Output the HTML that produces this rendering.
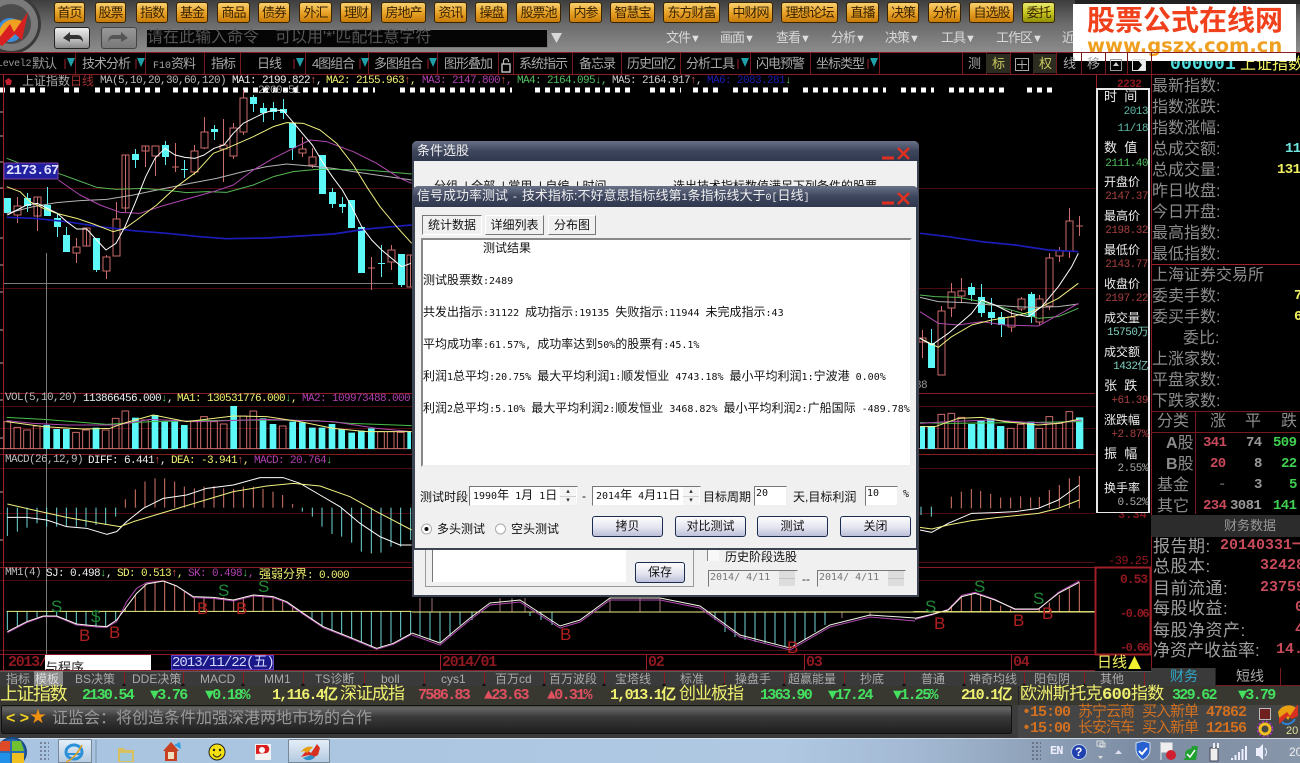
<!DOCTYPE html>
<html lang="zh-CN"><head><meta charset="utf-8"><title>条件选股</title>
<style>
html,body{margin:0;padding:0;background:#000;}
#p{position:relative;width:1300px;height:763px;overflow:hidden;background:#000;font-family:"Liberation Sans","Noto Sans CJK SC",sans-serif;color:#999;}
.t{position:absolute;white-space:nowrap;line-height:1;}
.m{font-family:"Liberation Mono","Noto Sans CJK SC",monospace;}
.b{position:absolute;box-sizing:border-box;}
svg{position:absolute;left:0;top:0;}
.btn{position:absolute;top:2px;height:21px;box-sizing:border-box;border:1px solid #3a2500;border-radius:3px;background:linear-gradient(#f8d070,#e8a428 50%,#c87c08);color:#3a2200;font-size:13px;letter-spacing:-1px;line-height:19px;text-align:center;white-space:nowrap;overflow:hidden;}
.mn{position:absolute;top:30px;font-size:13px;letter-spacing:-1px;color:#d8d8d8;white-space:nowrap;line-height:16px;}
.mn s{text-decoration:none;font-size:11px;color:#e0e0e0;letter-spacing:0;}
.r2{position:absolute;top:56px;font-size:13px;letter-spacing:-1px;color:#a8a8a8;line-height:16px;white-space:nowrap;}
.tb{position:absolute;top:673px;font-size:12px;color:#aaa;line-height:13px;white-space:nowrap;}
.tk{position:absolute;top:687px;font-size:15px;font-weight:bold;line-height:18px;white-space:nowrap;font-family:"Liberation Mono","Noto Sans CJK SC",monospace;letter-spacing:-1.700px;}
.g{color:#44e060;}.y{color:#f0f070;}.rd{color:#e05060;}
.lb{position:absolute;left:1152px;font-size:16px;color:#8c8c8c;line-height:18px;white-space:nowrap;}
.il{position:absolute;left:1104px;font-size:12px;color:#eee;line-height:14px;white-space:nowrap;}
.iv{position:absolute;right:152px;font-size:11px;line-height:12px;white-space:nowrap;font-family:"Liberation Mono","Noto Sans CJK SC",monospace;letter-spacing:-.5px;}
.fn{position:absolute;left:1153px;font-size:17px;color:#a0a0a0;line-height:19px;white-space:nowrap;letter-spacing:.5px;}
.fv{position:absolute;font-size:15px;font-weight:bold;color:#c84a5a;line-height:18px;white-space:nowrap;font-family:"Liberation Mono",monospace;}
.tn{position:absolute;font-size:14px;font-weight:bold;line-height:16px;white-space:nowrap;font-family:"Liberation Mono",monospace;letter-spacing:-.6px;}
.ttl{position:absolute;font-size:13px;color:#eee;white-space:nowrap;line-height:15px;}
.dt{position:absolute;font-size:10px;color:#111;white-space:nowrap;line-height:14px;font-family:"DejaVu Sans Mono","Liberation Mono",monospace;}
.dt i,.di i{font-style:normal;font-size:12px;font-family:"Noto Sans CJK SC",sans-serif;}
.di{position:absolute;font-size:10px;color:#111;white-space:nowrap;line-height:16px;font-family:"DejaVu Sans Mono","Liberation Mono",monospace;}
.lab{position:absolute;font-size:12px;color:#111;white-space:nowrap;line-height:14px;}
.pb{position:absolute;top:516px;width:71px;height:21px;box-sizing:border-box;border:1px solid #1c2c50;border-radius:3px;background:linear-gradient(#fcfcff,#e4e4f0 55%,#bcc0d8);font-size:12px;text-align:center;line-height:18px;color:#111;}
.tabb{position:absolute;top:215px;height:20px;box-sizing:border-box;background:#f0f0f0;border:1px solid;border-color:#fff #777 #777 #fff;font-size:12px;text-align:center;line-height:18px;color:#111;}
.inp{position:absolute;box-sizing:border-box;background:#fff;border:1px solid;border-color:#777 #eee #eee #777;height:20px;}
.sp{position:absolute;width:16px;height:18px;box-sizing:border-box;background:linear-gradient(#f5f5f5 49%,#888 50%,#f5f5f5 54%);font-size:7px;color:#333;text-align:center;line-height:9px;}
.sm{font-size:17px;color:#208838;}.bm{font-size:17px;color:#b02020;}
</style></head><body><div id="p">

<!-- toolbar -->
<div class="b" style="left:0;top:0;width:1300px;height:52px;background:linear-gradient(#3e3e3e,#6a6a6a 45%,#8c8c8c)"></div>
<svg width="50" height="52" viewBox="0 0 50 52"><circle cx="11" cy="24" r="30" fill="#3a3a3a"/><circle cx="11" cy="24" r="27" fill="#7a7a7a"/><circle cx="11" cy="24" r="20" fill="#4c4c4c"/><circle cx="10" cy="30" r="12" fill="#3a8ee0"/><path d="M-2 36C0 20 12 16 24 22L12 38Z" fill="#f0a020"/><path d="M-4 42L10 24 14 32 28 12 22 40 15 34 2 46Z" fill="#d82020"/></svg>

<div class="btn" style="left:54px;width:31px">首页</div><div class="btn" style="left:95px;width:31px">股票</div><div class="btn" style="left:136px;width:32px">指数</div><div class="btn" style="left:176px;width:32px">基金</div><div class="btn" style="left:217px;width:33px">商品</div><div class="btn" style="left:258px;width:32px">债券</div><div class="btn" style="left:299px;width:33px">外汇</div><div class="btn" style="left:340px;width:32px">理财</div><div class="btn" style="left:381px;width:45px">房地产</div><div class="btn" style="left:434px;width:33px">资讯</div><div class="btn" style="left:475px;width:33px">操盘</div><div class="btn" style="left:516px;width:45px">股票池</div><div class="btn" style="left:569px;width:33px">内参</div><div class="btn" style="left:610px;width:45px">智慧宝</div><div class="btn" style="left:663px;width:57px">东方财富</div><div class="btn" style="left:728px;width:45px">中财网</div><div class="btn" style="left:781px;width:57px">理想论坛</div><div class="btn" style="left:846px;width:33px">直播</div><div class="btn" style="left:887px;width:32px">决策</div><div class="btn" style="left:928px;width:33px">分析</div><div class="btn" style="left:969px;width:45px">自选股</div><div class="btn" style="left:1022px;width:33px;background:linear-gradient(#e8e870,#c8c820 50%,#909008)">委托</div>

<div class="b" style="left:54px;top:27px;width:36px;height:22px;border:1px solid #222;border-radius:3px;background:linear-gradient(#eee,#bbb 60%,#888)"></div>
<div class="b" style="left:101px;top:27px;width:36px;height:22px;border:1px solid #444;border-radius:3px;background:linear-gradient(#999,#777)"></div>
<svg width="140" height="52"><path d="M63 38l7-6v3h7c4 0 6 3 6 7-2-3-3-3-6-3h-7v3z" fill="#333"/><path d="M128 38l-7-6v3h-7c-4 0-6 3-6 7 2-3 3-3 6-3h7v3z" fill="#555"/></svg>
<div class="b" style="left:146px;top:29px;width:402px;height:19px;background:#050505;border:1px solid #777"></div>
<div class="t" style="left:147px;top:30px;font-size:16px;color:#565656">请在此输入命令　可以用'*'匹配任意字符</div>
<svg width="570" height="52"><path d="M551 33h11l-5.500 10z" fill="#d8d8d8"/></svg>

<div class="mn" style="left:666px">文件<s>▼</s></div><div class="mn" style="left:720px">画面<s>▼</s></div><div class="mn" style="left:776px">查看<s>▼</s></div><div class="mn" style="left:831px">分析<s>▼</s></div><div class="mn" style="left:885px">决策<s>▼</s></div><div class="mn" style="left:941px">工具<s>▼</s></div><div class="mn" style="left:996px">工作区<s>▼</s></div><div class="mn" style="left:1062px">近</div>

<!-- row 2 -->
<svg width="1300" height="90" style="z-index:1">
<path d="M0 52.500H1300M0 74.500H1300" stroke="#8a1c24" stroke-width="1"/>
<path d="M75.500 53V74M145.500 53V74M204.500 53V74M240.500 53V74M305.500 53V74M368.500 53V74M437.500 53V74M498.500 53V74M513.500 53V74M572.500 53V74M621.500 53V74M680.500 53V74M750.500 53V74M810.500 53V74M879.500 53V74M962.500 53V74M986.500 53V74M1010.500 53V74M1033.500 53V74M1056.500 53V74M1081.500 53V74M1105.500 53V74M1127.500 53V74M1151.500 53V74" stroke="#7a1820"/>
<path d="M65 59V69M136 59V69M294 59V69M360 59V69M428 59V69M738 59V69M868 59V69" stroke="#a02030"/>
<path d="M67 58h8l-4 9zM137 58h8l-4 9zM296 58h8l-4 9zM361 58h8l-4 9zM429 58h8l-4 9zM741 58h8l-4 9zM870 58h8l-4 9z" fill="#20a0a8"/>
<rect x="986" y="54" width="24" height="19" fill="#2c2c20"/><rect x="1033" y="54" width="23" height="19" fill="#2c2c20"/>
<rect x="1015.500" y="58.500" width="13" height="12" fill="none" stroke="#aaa"/><path d="M1022 60v9M1017 64.500h10" stroke="#aaa"/>
<rect x="1110.500" y="59.500" width="11" height="11" fill="none" stroke="#999"/><path d="M1116 62l-3 4h6z" fill="#ccc"/>
<rect x="1132.500" y="59.500" width="13" height="11" fill="none" stroke="#ddd"/><path d="M1138 60h7v10h-7l4-5z" fill="#eee"/>
<path d="M502 64h8v8h-8z" fill="none" stroke="#bbb" stroke-width="1.500"/><path d="M503.500 64v-3c0-3 5-3 5 0v1" fill="none" stroke="#bbb" stroke-width="1.200"/>
</svg>
<div style="position:absolute;left:0;top:0;width:1300px;height:90px;z-index:2">
<div class="t m" style="left:-3px;top:60px;font-size:10px;color:#999;letter-spacing:-.3px">Level2</div><div class="t" style="left:32px;top:57px;font-size:13px;letter-spacing:-1px;color:#999">默认</div>
<div class="r2" style="left:82px">技术分析</div><div class="r2" style="left:153px"><span class="m" style="font-size:10px;letter-spacing:0">F10</span>资料</div><div class="r2" style="left:211px">指标</div><div class="r2" style="left:257px">日线</div><div class="r2" style="left:312px">4图组合</div><div class="r2" style="left:374px">多图组合</div><div class="r2" style="left:444px">图形叠加</div><div class="r2" style="left:519px">系统指示</div><div class="r2" style="left:579px">备忘录</div><div class="r2" style="left:627px">历史回忆</div><div class="r2" style="left:686px">分析工具</div><div class="r2" style="left:756px">闪电预警</div><div class="r2" style="left:816px">坐标类型</div><div class="r2" style="left:968px">测</div><div class="r2" style="left:992px;color:#c8c860">标</div><div class="r2" style="left:1039px;color:#c8c860">权</div><div class="r2" style="left:1063px">线</div><div class="r2" style="left:1087px">移</div>
</div>

<!-- chart -->
<svg width="1300" height="763" viewBox="0 0 1300 763" fill="none">
<path d="M0 90H50M64 90H79M95 90H160M173 90H375M400 90H512M535 90H632M650 90H681M693 90H718M733 90H789M803 90H886M901 90H934M949 90H1004M1027 90H1052" stroke="#fff" stroke-width="5" stroke-dasharray="5 5"/>
<path d="M0 188.500H1095M0 288.500H1095M0 406.500H1095M0 428.500H1095M0 468.500H1095M0 513.500H1095M0 562.500H1095M0 580.500H1095M0 650.500H1095" stroke="#4a0c10"/>
<path d="M3.500 74V670M1096.500 74V513" stroke="#a02028"/>
<path d="M0 393.500H1095M0 454.500H1095M0 567.500H1095M0 654.500H1095M0 670.500H1095" stroke="#8a1c24"/>
<path d="M46.500 253V654M4 283.500H393" stroke="#7c7c7c"/>

<!-- candles -->
<path d="M17.500 197V206M17.500 215V223M14 206h7v9h-7zM37.500 197V231M34 197h7v19h-7zM76.500 238V247M76.500 253V263M73 247h7v6h-7zM86.500 228V246M83 228h7v18h-7zM106.500 255V257M106.500 271V279M103 257h7v14h-7zM116.500 202V219M113 219h7v37h-7zM125.500 155V212M122 155h7v53h-7zM145.500 146V167M142 146h7v5h-7zM155.500 156V176M152 146h7v10h-7zM175.500 143V172M172 167h7M194.500 145V151M194.500 172V175M191 151h7v21h-7zM204.500 117V132M204.500 148V149M201 132h7v16h-7zM223.500 119V145M223.500 149V182M220 145h7v4h-7zM233.500 123V128M233.500 156V159M230 128h7v28h-7zM243.500 90V98M243.500 132V135M240 98h7v34h-7zM302.500 137V149M302.500 153V157M299 149h7v4h-7zM312.500 148V157M312.500 165V168M309 157h7v8h-7zM371.500 257V290M368 268h7M391.500 245V250M391.500 262V270M388 250h7v12h-7zM410.500 255V287M407 255h7v32h-7z" stroke="#cc6c6c"/>
<path d="M47.500 187V205M57.500 213V218M57.500 227V237M27.500 193V198M27.500 206V212M66.500 227V235M96.500 270V272M135.500 149V154M135.500 160V168M165.500 141V145M165.500 157V165M184.500 160V178M181 169.500h7M214.500 125V140M253.500 95V112M263.500 103V122M273.500 102V120M283.500 99V119M292.500 148V160M332.500 188V208M342.500 197V213M381.500 245V277M378 263.500h7M401.500 285V287" stroke="#5cf0f0"/>
<path d="M4 198h7v15h-7zM24 198h7v8h-7zM44 205h7v11h-7zM54 218h7v9h-7zM63 235h7v17h-7zM93 238h7v32h-7zM132 154h7v6h-7zM162 145h7v12h-7zM211 129h7v3h-7zM250 97h7v7h-7zM260 108h7v5h-7zM270 108h7v4h-7zM280 109h7v4h-7zM289 123h7v25h-7zM319 155h7v39h-7zM329 192h7v12h-7zM339 204h7v3h-7zM348 200h7v28h-7zM358 227h7v46h-7zM398 254h7v31h-7z" fill="#5cf8f8"/>
<path d="M922.500 330V358M919 338h7v4h-7zM941.500 306V311M938 311h7v64h-7zM951.500 283V292M951.500 308V317M948 292h7v16h-7zM961.500 278V291M961.500 296V302M958 291h7v5h-7zM1011.500 310V317M1011.500 327V332M1008 317h7v10h-7zM1021.500 297V299M1021.500 309V311M1018 299h7v10h-7zM1039.500 295V299M1039.500 322V325M1036 299h7v23h-7zM1049.500 253V258M1049.500 306V310M1046 258h7v48h-7zM1059.500 247V251M1059.500 256V262M1056 251h7v5h-7zM1069.500 208V221M1069.500 251V258M1066 221h7v30h-7zM1079.500 216V236M1076 226h7" stroke="#cc6c6c"/>
<path d="M931.500 329V343M971.500 283V287M971.500 295V301M981.500 284V297M981.500 313V317M991.500 298V312M991.500 318V325M1001.500 312V317M1001.500 325V337M1031.500 292V294M1031.500 317V323" stroke="#5cf0f0"/>
<path d="M928 343h7v25h-7zM968 287h7v8h-7zM978 297h7v16h-7zM988 312h7v6h-7zM998 317h7v8h-7zM1028 294h7v23h-7z" fill="#5cf8f8"/>

<!-- MA lines left -->
<g transform="translate(0,80) scale(.33333)" stroke-width="3" stroke-linejoin="round">
<path stroke="#1c1cb8" stroke-width="5" d="M20 412L100 415 200 425 300 440 400 452 500 460 600 470 680 476 800 474 900 468 1000 462 1100 447 1235 435"/>
<path stroke="#b4b4b4" d="M20 400L100 380 170 368 240 362 320 358 400 345 480 328 570 310 650 295 730 275 800 260 860 252 930 258 1000 265 1060 275 1130 285 1235 300"/>
<path stroke="#56b856" d="M20 235L60 250 175 280 230 300 290 322 350 328 430 325 510 332 560 338 620 335 680 337 760 315 820 290 880 275 950 268 1010 268 1100 270 1235 282"/>
<path stroke="#b048b0" d="M175 300L240 345 300 375 360 397 420 400 480 380 550 360 640 335 700 315 760 270 820 235 880 205 930 180 980 185 1060 215 1130 250 1200 295 1235 310"/>
<path stroke="#f0f080" d="M20 320L60 335 90 365 130 385 170 400 230 415 280 432 340 455 375 445 410 420 470 375 530 320 590 275 640 220 680 205 760 170 820 140 860 128 910 130 960 150 1010 190 1060 255 1100 320 1140 380 1190 440 1235 490"/>
<path stroke="#fff" d="M22 405L80 375 112 370 142 385 172 400 200 425 230 447 260 447 290 480 318 510 348 490 375 440 405 370 437 290 465 235 495 205 525 225 555 232 585 235 612 225 642 205 672 195 700 160 730 130 760 115 790 100 820 90 850 92 878 125 907 160 937 195 967 245 997 290 1027 330 1055 380 1085 440 1115 480 1145 510 1175 535 1205 560 1233 550"/>
</g>
<!-- MA lines right -->
<g transform="translate(915,90) scale(.33333)" stroke-width="3" stroke-linejoin="round">
<path stroke="#1c1cb8" stroke-width="5" d="M15 430L100 440 200 455 300 465 400 480 490 485"/>
<path stroke="#56b856" d="M15 615L60 620 130 622 200 635 270 655 330 672 370 685 430 680 490 655"/>
<path stroke="#b4b4b4" d="M15 622L70 635 150 638 230 645 300 650 360 652 430 650 490 642"/>
<path stroke="#b048b0" d="M15 665L70 700 130 705 200 695 270 705 330 707 370 708 430 675 490 640"/>
<path stroke="#f0f080" d="M15 745L70 772 110 740 170 705 230 690 290 680 350 665 430 625 490 580"/>
<path stroke="#fff" d="M15 745L50 765 100 730 170 670 200 630 240 645 290 670 340 680 380 650 430 590 470 530 490 490"/>
</g>

<!-- VOL / MACD / MM1 left -->
<g transform="translate(0,380) scale(.33333)" stroke-width="3" stroke-linejoin="round">
<path stroke="#cc6c6c" d="M12 206V125h20V206M42 206V142h20V206M71 206V150h20V206M100 206V138h20V206M218 206V157h20V206M248 206V150h20V206M307 206V150h20V206M337 206V115h20V206M366 206V93h20V206M425 206V120h20V206M572 206V125h20V206M602 206V110h20V206M632 206V125h20V206M661 206V132h20V206M720 206V108h20V206M750 206V93h20V206M838 206V138h20V206M1133 206V155h20V206M1162 206V155h20V206M1192 206V157h20V206M0 206H1233"/>
<path fill="#5cf8f8" d="M130 207V135h20V207zM160 207V147h20V207zM189 207V147h20V207zM278 207V143h20V207zM396 207V113h20V207zM455 207V105h20V207zM484 207V125h20V207zM514 207V125h20V207zM543 207V135h20V207zM691 207V78h20V207zM779 207V115h20V207zM809 207V132h20V207zM868 207V125h20V207zM897 207V127h20V207zM927 207V143h20V207zM956 207V143h20V207zM986 207V132h20V207zM1015 207V148h20V207zM1045 207V158h20V207zM1074 207V152h20V207zM1104 207V145h20V207zM1222 207V155h11V207z"/>
<path stroke="#48c048" d="M20 112L130 118 220 125 320 133 450 125 600 122 800 120 950 122 1050 130 1235 137"/>
<path stroke="#b048b0" d="M20 122L100 130 200 135 350 135 450 118 600 125 800 118 1000 125 1130 145 1235 155"/>
<path stroke="#f0f080" d="M20 125L130 140 250 147 330 145 370 130 460 105 560 125 700 108 800 110 900 125 1000 145 1100 155 1235 155"/>
<!-- MACD -->
<path stroke="#70d8d8" d="M22 383V468M52 383V455M81 383V443M111 383V430M140 383V440M170 383V440M199 383V440M229 383V440M258 383V440M288 383V435M317 383V435M347 383V410M907 383V395M937 383V410M966 383V440M996 383V462M1025 383V470M1055 383V488M1084 383V515M1114 383V520M1143 383V518M1173 383V500M1202 383V500M1232 383V480"/>
<path stroke="#d87868" d="M376 383V358M406 383V328M435 383V305M465 383V295M494 383V295M524 383V305M553 383V320M583 383V325M612 383V320M642 383V318M671 383V325M701 383V327M730 383V320M760 383V320M789 383V327M819 383V335M848 383V345M878 383V372"/>
<path stroke="#fff" d="M22 412L80 412 140 420 200 440 260 445 320 463 350 455 380 425 430 385 490 355 560 345 620 325 700 315 780 293 850 293 900 310 960 345 1020 380 1080 430 1140 470 1200 495 1235 495"/>
<path stroke="#f0f080" d="M22 372L100 390 200 412 300 430 360 440 400 425 500 395 600 365 700 335 800 318 880 310 960 318 1050 350 1130 395 1235 450"/>
<!-- MM1 -->
<path stroke="#70d8d8" d="M22 694V750M52 694V738M81 694V723M111 694V712M140 694V707M170 694V708M199 694V722M229 694V732M258 694V735M288 694V738M317 694V740M347 694V722M936 694V722M966 694V738M996 694V755M1025 694V767M1055 694V778M1084 694V790M1114 694V802M1143 694V800M1173 694V788M1202 694V772M1232 694V762"/>
<path stroke="#d87868" d="M376 694V685M406 694V645M435 694V612M465 694V605M494 694V603M524 694V615M553 694V635M583 694V650M612 694V650M642 694V652M671 694V652M701 694V660M730 694V655M760 694V645M789 694V645M819 694V650M848 694V662M878 694V680"/>
<path stroke="#f0f080" stroke-width="3" d="M20 694H1235"/>
<path stroke="#b048b0" d="M22 758L80 728 130 710 170 710 230 735 290 741 320 742 350 725 380 665 410 625 440 608 490 603 530 618 580 653 640 655 700 663 760 648 820 653 860 668 910 703 970 743 1050 775 1130 808 1180 793 1235 763"/>
<path stroke="#f8f8e8" d="M22 755L80 725 130 708 170 708 230 732 290 738 320 740 350 720 380 680 410 640 440 612 490 603 530 618 580 650 640 652 700 660 760 645 820 650 860 665 910 700 970 740 1050 772 1130 805 1180 790 1235 760"/>
</g>
<!-- right lower -->
<g transform="translate(915,380) scale(.33333)" stroke-width="3" stroke-linejoin="round">
<path stroke="#cc6c6c" d="M69 206V103h20V206M99 206V100h20V206M129 206V112h20V206M277 206V145h20V206M307 206V133h20V206M363 206V145h20V206M393 206V110h20V206M423 206V130h20V206M453 206V95h20V206M0 206H505"/>
<path fill="#5cf8f8" d="M15 207V138h15V207zM38 207V138h22V207zM159 207V132h22V207zM187 207V122h22V207zM216 207V115h22V207zM246 207V138h22V207zM336 207V125h22V207zM483 207V112h22V207z"/>
<path stroke="#48c048" d="M15 128L100 130 300 128 500 125"/>
<path stroke="#b048b0" d="M15 130L100 125 230 120 340 127 420 130 500 120"/>
<path stroke="#f0f080" d="M15 140L60 140 130 115 200 112 270 125 370 135 430 130 490 118"/>
<path stroke="#d87868" d="M109 385V350M139 385V335M169 385V327M197 385V333M227 385V342M257 385V353M287 385V353M317 385V349M347 385V352M373 385V351M403 385V330M433 385V315M463 385V295M493 385V288"/>
<path stroke="#70d8d8" d="M18 380V405M49 380V410"/>
<path stroke="#fff" d="M15 450L50 457 100 430 170 400 240 398 300 395 370 385 430 360 493 315"/>
<path stroke="#f0f080" d="M15 442L50 447 100 435 170 422 250 412 370 400 430 385 493 360"/>
<path stroke="#d87868" d="M109 695V675M139 695V650M169 695V640M197 695V642M227 695V660M257 695V677M287 695V687M373 695V687M403 695V668M433 695V645M463 695V625M493 695V607"/>
<path stroke="#f0f080" d="M-5 695H540"/>
<path stroke="#b048b0" d="M0 718L50 705 100 688 140 646 180 637 240 658 300 689 370 689 430 637 493 603"/>
<path stroke="#f8f8e8" d="M0 715L50 703 100 690 140 650 180 640 240 660 300 687 370 687 430 640 493 607"/>
</g>
<!-- below dialog mm1 -->
<path stroke="#e0a0a8" d="M420 598V612M432 598V612M500 598V612M512 598V612M525 598V612M610 598V612M640 598V612M660 598V612M842 612V618M870 612V616" opacity=".7"/>
<path stroke="#70d8d8" d="M420 612V636M430 612V640M440 612V642M450 612V636M460 612V625M472 612V620M530 612V616M541 612V620M552 612V625M715 612V620M725 612V632M735 612V637M745 612V640M755 612V642M765 612V643M775 612V644M785 612V646M795 612V645M805 612V640M815 612V632M825 612V625"/>
<path stroke="#f0f080" d="M412 612H1096"/>
<path stroke="#b048b0" d="M412 635L440 645 470 620 490 605 520 602 560 628 580 622 610 600 660 600 700 608 740 637 790 650 830 627 870 617 915 621"/>
<path stroke="#f4f4e8" d="M412 633L440 643 470 618 490 603 520 600 560 626 580 620 610 598 660 598 700 606 740 635 790 648 830 625 870 615 915 618"/>
<!-- axis ticks -->
<path d="M440.500 655V670M646.500 655V670M804.500 655V670M1011.500 655V670" stroke="#a02028"/>
<path d="M0 112h3M0 136h3M0 162h3M0 188h3M0 238h3M0 265h3M0 292h3M0 330h3M0 363h3M0 400h3M0 438h3M0 492h3M0 540h3" stroke="#c8a0a0"/>
<rect x="1095.500" y="567.500" width="55" height="87" stroke="#a02028" stroke-width="2"/>
<rect x="4" y="163" width="54" height="16" fill="#2020a0" stroke="#8040a0"/>
</svg>

<!-- chart labels -->
<div class="t" style="left:5px;top:78px;width:7px;height:7px;background:#c02030;clip-path:polygon(50% 0,100% 40%,80% 100%,20% 100%,0 40%)"></div>
<div class="t" style="left:22px;top:75px;font-size:12px;color:#aaa">上证指数<span style="color:#a03030">日线</span></div>
<div class="t m" style="left:100px;top:76px;font-size:11px;color:#bbb;letter-spacing:-.6px">MA(5,10,20,30,60,120)</div>
<div class="t m" style="left:232px;top:76px;font-size:11px;color:#eee;letter-spacing:-.6px">MA1: 2199.822<span style="color:#d05050">↑</span>,</div>
<div class="t m" style="left:326px;top:76px;font-size:11px;color:#f0f070;letter-spacing:-.6px">MA2: 2155.963<span style="color:#d05050">↑</span>,</div>
<div class="t m" style="left:422px;top:76px;font-size:11px;color:#b040b0;letter-spacing:-.6px">MA3: 2147.800<span style="color:#d05050">↑</span>,</div>
<div class="t m" style="left:517px;top:76px;font-size:11px;color:#50c060;letter-spacing:-.6px">MA4: 2164.095<span style="color:#50c060">↓</span>,</div>
<div class="t m" style="left:612px;top:76px;font-size:11px;color:#ccc;letter-spacing:-.6px">MA5: 2164.917<span style="color:#d05050">↑</span>,</div>
<div class="t m" style="left:707px;top:76px;font-size:11px;color:#1c1cb0;letter-spacing:-.6px">MA6: 2083.281<span style="color:#50c060">↓</span></div>
<div class="t m" style="left:258px;top:86px;font-size:11px;color:#aaa;letter-spacing:-.6px">2200.51</div>
<div class="t m" style="left:6px;top:164px;font-size:14px;font-weight:bold;color:#e0e0ff;letter-spacing:-.9px">2173.67</div>
<div class="t m" style="left:915px;top:381px;font-size:11px;color:#999;letter-spacing:-.6px">88</div>

<div class="t m" style="left:5px;top:393px;font-size:11px;color:#bbb;letter-spacing:-.6px">VOL(5,10,20)</div>
<div class="t m" style="left:83px;top:394px;font-size:11px;color:#eee;letter-spacing:-.6px">113866456.000<span style="color:#50c060">↓</span>,</div>
<div class="t m" style="left:177px;top:394px;font-size:11px;color:#f0f070;letter-spacing:-.6px">MA1: 130531776.000<span style="color:#50c060">↓</span>,</div>
<div class="t m" style="left:302px;top:394px;font-size:11px;color:#b040b0;letter-spacing:-.6px">MA2: 109973488.000</div>

<div class="t m" style="left:5px;top:455px;font-size:11px;color:#bbb;letter-spacing:-.6px">MACD(26,12,9)</div>
<div class="t m" style="left:88px;top:456px;font-size:11px;color:#eee;letter-spacing:-.6px">DIFF: 6.441<span style="color:#d05050">↑</span>,</div>
<div class="t m" style="left:171px;top:456px;font-size:11px;color:#f0f070;letter-spacing:-.6px">DEA: -3.941<span style="color:#d05050">↑</span>,</div>
<div class="t m" style="left:254px;top:456px;font-size:11px;color:#b040b0;letter-spacing:-.6px">MACD: 20.764<span style="color:#50c060">↓</span></div>

<div class="t m" style="left:5px;top:568px;font-size:11px;color:#bbb;letter-spacing:-.6px">MM1(4)</div>
<div class="t m" style="left:46px;top:569px;font-size:11px;color:#eee;letter-spacing:-.6px">SJ: 0.498<span style="color:#50c060">↓</span>,</div>
<div class="t m" style="left:117px;top:569px;font-size:11px;color:#f0f070;letter-spacing:-.6px">SD: 0.513<span style="color:#d05050">↑</span>,</div>
<div class="t m" style="left:188px;top:569px;font-size:11px;color:#b040b0;letter-spacing:-.6px">SK: 0.498<span style="color:#50c060">↓</span>,</div>
<div class="t" style="left:259px;top:568px;font-size:12px;color:#f0f070">强弱分界<span class="m" style="font-size:11px;letter-spacing:-.6px">: 0.000</span></div>

<!-- S B marks -->
<div class="t sm" style="left:51px;top:598px">S</div>
<div class="t sm" style="left:91px;top:608px">$</div>
<div class="t sm" style="left:218px;top:582px">S</div>
<div class="t sm" style="left:258px;top:578px">S</div>
<div class="t bm" style="left:79px;top:627px">B</div>
<div class="t bm" style="left:109px;top:624px">B</div>
<div class="t bm" style="left:197px;top:600px">B</div>
<div class="t bm" style="left:236px;top:600px">B</div>
<div class="t bm" style="left:560px;top:626px">B</div>
<div class="t bm" style="left:787px;top:639px">B</div>
<div class="t sm" style="left:925px;top:598px">S</div>
<div class="t sm" style="left:974px;top:578px">S</div>
<div class="t sm" style="left:1033px;top:590px">S</div>
<div class="t bm" style="left:934px;top:615px">B</div>
<div class="t bm" style="left:1013px;top:612px">B</div>
<div class="t bm" style="left:1042px;top:605px">B</div>

<!-- x axis -->
<div class="t m" style="left:8px;top:655px;font-size:15px;font-weight:bold;color:#901820;letter-spacing:-1.300px">2013/</div>
<div class="b" style="left:45px;top:655px;width:106px;height:15px;background:#fff;overflow:hidden"><span class="t" style="left:0;top:6px;font-size:13px;color:#222">与程序</span></div>
<div class="b" style="left:171px;top:655px;width:103px;height:15px;background:#181888;border:1px solid #6040c0"></div>
<div class="t m" style="left:172px;top:656px;font-size:14px;color:#d8d8ff;letter-spacing:-1px">2013/11/22(五)</div>
<div class="t m" style="left:442px;top:655px;font-size:15px;font-weight:bold;color:#901820;letter-spacing:-1.300px">2014/01</div>
<div class="t m" style="left:648px;top:655px;font-size:15px;font-weight:bold;color:#901820;letter-spacing:-1.300px">02</div>
<div class="t m" style="left:806px;top:655px;font-size:15px;font-weight:bold;color:#901820;letter-spacing:-1.300px">03</div>
<div class="t m" style="left:1013px;top:655px;font-size:15px;font-weight:bold;color:#901820;letter-spacing:-1.300px">04</div>
<div class="t" style="left:1097px;top:655px;font-size:15px;color:#f0f060">日线</div>
<svg width="1300" height="763"><path d="M1128 669l6.500-13 6.500 13z" fill="#f0f030"/></svg>

<!-- price axis -->
<div class="t m" style="left:1117px;top:80px;font-size:11px;font-weight:bold;color:#901820;letter-spacing:-.5px">2232</div>
<div class="t m" style="left:1118px;top:509px;font-size:12px;color:#801820;font-weight:bold">3.34</div>
<div class="t m" style="left:1108px;top:555px;font-size:12px;color:#901820;letter-spacing:-.5px">-39.25</div>
<div class="t m" style="left:1120px;top:573px;font-size:13px;font-weight:bold;color:#901820;letter-spacing:-1px">0.53</div>
<div class="t m" style="left:1120px;top:608px;font-size:12px;font-weight:bold;color:#901820;letter-spacing:-1.600px">-0.06</div>
<div class="t m" style="left:1120px;top:642px;font-size:12px;font-weight:bold;color:#901820;letter-spacing:-1.600px">-0.66</div>

<!-- info column -->
<div class="b" style="left:1096px;top:88px;width:54px;height:425px;background:#000;border:2px solid #e8e8e8;border-bottom-width:1px"></div>
<div class="il" style="top:90px;font-size:13px">时 &nbsp;间</div><div class="iv" style="top:106px;color:#60b8a8">2013</div><div class="iv" style="top:123px;color:#60b8a8">11/18</div>
<div class="il" style="top:141px;font-size:13px">数 &nbsp;值</div><div class="iv" style="top:158px;color:#50c060">2111.40</div>
<div class="il" style="top:175px">开盘价</div><div class="iv" style="top:191px;color:#a84040">2147.37</div>
<div class="il" style="top:209px">最高价</div><div class="iv" style="top:225px;color:#a84040">2198.32</div>
<div class="il" style="top:243px">最低价</div><div class="iv" style="top:259px;color:#a84040">2143.77</div>
<div class="il" style="top:277px">收盘价</div><div class="iv" style="top:293px;color:#a84040">2197.22</div>
<div class="il" style="top:311px">成交量</div><div class="iv" style="top:327px;color:#80d0c0">15750万</div>
<div class="il" style="top:345px">成交额</div><div class="iv" style="top:361px;color:#80d0c0">1432亿</div>
<div class="il" style="top:379px;font-size:13px">张 &nbsp;跌</div><div class="iv" style="top:395px;color:#a84040">+61.39</div>
<div class="il" style="top:413px">涨跌幅</div><div class="iv" style="top:429px;color:#a84040">+2.87%</div>
<div class="il" style="top:447px;font-size:13px">振 &nbsp;幅</div><div class="iv" style="top:463px;color:#aaa">2.55%</div>
<div class="il" style="top:481px">换手率</div><div class="iv" style="top:497px;color:#aaa">0.52%</div>

<!-- right panel -->
<div class="b" style="left:1151px;top:52px;width:149px;height:633px;background:#000;border-left:1px solid #8a1c24"></div>
<div class="t" style="left:1170px;top:56px;font-size:18px;font-weight:bold;color:#50e0e0;font-family:'Liberation Mono',monospace;letter-spacing:.2px">000001</div>
<div class="t" style="left:1240px;top:57px;font-size:16px;color:#f0f060">上证指数</div>
<div class="lb" style="top:78px">最新指数:</div><div class="lb" style="top:99px">指数涨跌:</div><div class="lb" style="top:120px">指数涨幅:</div><div class="lb" style="top:141px">总成交额:</div><div class="lb" style="top:162px">总成交量:</div><div class="lb" style="top:183px">昨日收盘:</div><div class="lb" style="top:204px">今日开盘:</div><div class="lb" style="top:225px">最高指数:</div><div class="lb" style="top:246px">最低指数:</div>
<div class="b" style="left:1151px;top:264px;width:149px;height:1px;background:#a02028"></div>
<div class="lb" style="top:267px">上海证券交易所</div><div class="lb" style="top:288px">委卖手数:</div><div class="lb" style="top:309px">委买手数:</div><div class="lb" style="top:330px;left:1183px">委比:</div><div class="lb" style="top:351px">上涨家数:</div><div class="lb" style="top:372px">平盘家数:</div><div class="lb" style="top:393px">下跌家数:</div>
<div class="tn" style="left:1285px;top:141px;color:#70e8e0">11</div><div class="tn" style="left:1277px;top:162px;color:#f0f060">131</div><div class="tn" style="left:1294px;top:288px;color:#f0f060">7</div><div class="tn" style="left:1294px;top:309px;color:#f0f060">6</div>

<div class="b" style="left:1151px;top:411px;width:149px;height:1px;background:#7a1820"></div>
<div class="b" style="left:1151px;top:432px;width:149px;height:1px;background:#7a1820"></div>
<div class="b" style="left:1195px;top:411px;width:1px;height:103px;background:#7a1820"></div>
<div class="lb" style="top:413px;left:1157px">分类</div><div class="lb" style="top:413px;left:1210px">涨</div><div class="lb" style="top:413px;left:1245px">平</div><div class="lb" style="top:413px;left:1281px">跌</div>
<div class="lb" style="top:435px;left:1166px"><b style="font-family:'Liberation Sans'">A</b>股</div><div class="lb" style="top:456px;left:1166px"><b style="font-family:'Liberation Sans'">B</b>股</div><div class="lb" style="top:477px;left:1157px">基金</div><div class="lb" style="top:498px;left:1157px">其它</div>
<div class="tn" style="left:1203px;top:435px;color:#c84a5a">341</div><div class="tn" style="left:1246px;top:435px;color:#999">74</div><div class="tn" style="left:1273px;top:435px;color:#40d050">509</div>
<div class="tn" style="left:1210px;top:456px;color:#c84a5a">20</div><div class="tn" style="left:1254px;top:456px;color:#999">8</div><div class="tn" style="left:1281px;top:456px;color:#40d050">22</div>
<div class="tn" style="left:1218px;top:477px;color:#555">-</div><div class="tn" style="left:1254px;top:477px;color:#999">3</div><div class="tn" style="left:1289px;top:477px;color:#40d050">5</div>
<div class="tn" style="left:1203px;top:498px;color:#c84a5a">234</div><div class="tn" style="left:1230px;top:498px;color:#999">3081</div><div class="tn" style="left:1273px;top:498px;color:#40d050">141</div>

<div class="b" style="left:1151px;top:515px;width:149px;height:22px;background:#2c2c2c"></div>
<div class="t" style="left:1224px;top:519px;font-size:13px;color:#999">财务数据</div>
<div class="fn" style="top:537px">报告期:</div><div class="fv" style="left:1220px;top:537px">20140331一</div>
<div class="fn" style="top:557px">总股本:</div><div class="fv" style="left:1260px;top:557px">32428</div>
<div class="fn" style="top:579px">目前流通:</div><div class="fv" style="left:1260px;top:579px">23759</div>
<div class="fn" style="top:599px">每股收益:</div><div class="fv" style="left:1295px;top:599px">0</div>
<div class="fn" style="top:621px">每股净资产:</div><div class="fv" style="left:1295px;top:621px">4</div>
<div class="fn" style="top:641px;letter-spacing:0">净资产收益率:</div><div class="fv" style="left:1276px;top:641px">14.1</div>

<!-- tabs -->
<div class="b" style="left:0;top:671px;width:1151px;height:16px;background:#3a3a3a;border-top:1px solid #5a5a5a"></div>
<div class="b" style="left:34px;top:671px;width:29px;height:16px;background:#8c8c8c"></div>
<div class="tb" style="left:6px">指标</div><div class="tb" style="left:35px;color:#ddd">模板</div><div class="tb" style="left:75px">BS决策</div><div class="tb" style="left:132px">DDE决策</div><div class="tb" style="left:200px">MACD</div><div class="tb" style="left:264px">MM1</div><div class="tb" style="left:315px">TS诊断</div><div class="tb" style="left:381px">boll</div><div class="tb" style="left:441px">cys1</div><div class="tb" style="left:495px">百万cd</div><div class="tb" style="left:549px">百万波段</div><div class="tb" style="left:615px">宝塔线</div><div class="tb" style="left:680px">标准</div><div class="tb" style="left:735px">操盘手</div><div class="tb" style="left:788px">超赢能量</div><div class="tb" style="left:860px">抄底</div><div class="tb" style="left:921px">普通</div><div class="tb" style="left:969px">神奇均线</div><div class="tb" style="left:1034px">阳包阴</div><div class="tb" style="left:1100px">其他</div>
<svg width="1300" height="763"><path d="M124 672V686M183 672V686M243 672V686M303 672V686M364 672V686M424 672V686M484 672V686M544 672V686M604 672V686M664 672V686M724 672V686M784 672V686M844 672V686M904 672V686M964 672V686M1024 672V686M1084 672V686M1144 672V686" stroke="#8a1c24" transform="translate(.5,0)"/><path d="M121 687l3-4 3 4zM180 687l3-4 3 4zM240 687l3-4 3 4zM300 687l3-4 3 4zM361 687l3-4 3 4zM421 687l3-4 3 4zM481 687l3-4 3 4zM541 687l3-4 3 4zM601 687l3-4 3 4zM661 687l3-4 3 4zM721 687l3-4 3 4zM781 687l3-4 3 4zM841 687l3-4 3 4zM901 687l3-4 3 4zM961 687l3-4 3 4zM1021 687l3-4 3 4zM1081 687l3-4 3 4z" fill="#111"/></svg>
<div class="b" style="left:1151px;top:668px;width:65px;height:18px;background:#3a3a3a;border-right:1px solid #222"></div>
<div class="t" style="left:1170px;top:669px;font-size:14px;color:#30a8c8">财务</div>
<div class="t" style="left:1236px;top:669px;font-size:14px;color:#aaa">短线</div>
<div class="b" style="left:1280px;top:668px;width:1px;height:18px;background:#7a1820"></div>
<div class="b" style="left:1216px;top:685px;width:84px;height:1px;background:#7a1820"></div>

<!-- ticker -->
<div class="b" style="left:0;top:686px;width:1300px;height:19px;background:#383830"></div>
<div class="tk y" style="left:0;font-weight:normal;font-size:18px;letter-spacing:-1.500px">上证指数</div>
<div class="tk g" style="left:82px">2130.54</div><div class="tk g" style="left:150px">▼3.76</div><div class="tk g" style="left:205px">▼0.18%</div><div class="tk y" style="left:272px">1,116.4亿</div><div class="tk y" style="left:340px;font-weight:normal;font-size:17px;letter-spacing:-1px">深证成指</div>
<div class="tk rd" style="left:418px">7586.83</div><div class="tk rd" style="left:484px">▲23.63</div><div class="tk rd" style="left:547px">▲0.31%</div><div class="tk y" style="left:610px">1,013.1亿</div><div class="tk y" style="left:679px;font-weight:normal;font-size:17px;letter-spacing:-1px">创业板指</div>
<div class="tk g" style="left:760px">1363.90</div><div class="tk g" style="left:828px">▼17.24</div><div class="tk g" style="left:893px">▼1.25%</div><div class="tk y" style="left:961px">210.1亿</div>
<div class="b" style="left:1018px;top:686px;width:1px;height:52px;background:#222"></div>
<div class="tk y" style="left:1020px;font-weight:normal;font-size:17px;letter-spacing:-.6px">欧洲斯托克<b>600</b>指数</div>
<div class="tk g" style="left:1172px">329.62</div><div class="tk g" style="left:1238px">▼3.79</div>

<!-- news -->
<div class="b" style="left:0;top:705px;width:1300px;height:33px;background:#3c3c3c"></div>
<div class="b" style="left:1px;top:705px;width:1011px;height:29px;border-radius:2px;border:1px solid #111;background:linear-gradient(#4a4a4a,#666 8%,#3a3a3a 40%,#1e1e1e)"></div>
<div class="t" style="left:6px;top:711px;font-size:16px;color:#f0d020;font-weight:bold">&lt; &gt;</div>
<div class="t" style="left:30px;top:710px;font-size:16px;color:#f09010">★</div>
<div class="t" style="left:52px;top:711px;font-size:16px;color:#9a9a9a">证监会：将创造条件加强深港两地市场的合作</div>
<div class="b" style="left:1018px;top:705px;width:282px;height:33px;background:#454545"></div>
<div class="t" style="left:1022px;top:705px;font-size:15px;font-weight:bold;color:#d07020;font-family:'Liberation Mono','Noto Sans CJK SC',monospace;letter-spacing:-1px">•15:00 <span style="font-weight:normal">苏宁云商 买入新单</span> 47862</div>
<div class="t" style="left:1022px;top:721px;font-size:15px;font-weight:bold;color:#d07020;font-family:'Liberation Mono','Noto Sans CJK SC',monospace;letter-spacing:-1px">•15:00 <span style="font-weight:normal">长安汽车 买入新单</span> 12156</div>
<div class="b" style="left:1259px;top:708px;width:12px;height:12px;background:#702020;border:1px solid #bbb"></div>
<svg width="1300" height="763"><circle cx="1265" cy="729" r="5" fill="none" stroke="#f0c020" stroke-width="3"/><circle cx="1265" cy="729" r="7.500" fill="none" stroke="#b030d0" stroke-width="1.500" stroke-dasharray="2 2"/>
<path d="M1278 712c4-8 14-8 18-4l-8 12-4-5-4 7z" fill="#e8a010"/><path d="M1279 718l8-6 3 4 8-12v12l-6 3-4-3-9 8z" fill="#d83020"/><path d="M1282 722c4 4 10 2 13-3" stroke="#3080d0" stroke-width="2" fill="none"/></svg>
<div class="t" style="left:1286px;top:726px;font-size:11px;color:#e0e0a0">20</div>
<div class="b" style="left:0;top:734px;width:1018px;height:4px;background:#3a3a3a"></div>

<!-- taskbar -->
<div class="b" style="left:0;top:738px;width:1300px;height:25px;background:linear-gradient(90deg,#a8c4e0,#b0c8e2 60%,#a4bad4 70%,#7c8ca2 88%,#8896aa)"></div>
<div class="b" style="left:0;top:738px;width:1300px;height:1px;background:#dfe8f2;opacity:.8"></div>
<div class="b" style="left:58px;top:739px;width:34px;height:24px;background:linear-gradient(#e4eef8,#b4cae0);border:1px solid #789;border-radius:2px 2px 0 0"></div>
<div class="b" style="left:288px;top:739px;width:42px;height:24px;background:linear-gradient(#e4eef8,#b4cae0);border:1px solid #789;border-radius:2px 2px 0 0"></div>
<svg width="1300" height="763">
<circle cx="12" cy="752" r="15" fill="#184a88"/><circle cx="12" cy="752" r="13" fill="#2a6ab0"/><path d="M1 741h9v10H-2z" fill="#e84820" opacity=".95"/><path d="M12 741h9l3 10H12z" fill="#70c030"/><path d="M-1 753h11v10H0z" fill="#2090e8"/><path d="M12 753h12v10H12z" fill="#f0c020"/>
<path d="M40 743h9M40 747h9M40 751h9M40 755h9M40 759h9M1032 743h9M1032 747h9M1032 751h9M1032 755h9M1032 759h9" stroke="#445" stroke-dasharray="2 2"/>
<path d="M96 740V763" stroke="#7d93ab"/>
<ellipse cx="74" cy="752" rx="8" ry="7" fill="none" stroke="#2a90d8" stroke-width="3"/><path d="M65 754h16" stroke="#2a90d8" stroke-width="2"/><path d="M66 762c6-2 12-9 16-17" stroke="#e0a020" stroke-width="1.500" fill="none"/>
<path d="M118 748h6l1 2h9v12h-16z" fill="#d8c060"/><rect x="120" y="753" width="12" height="8" fill="#a0c8d8"/>
<path d="M171 742l-8 9h2v10h12v-10h2z" fill="#c84020"/><rect x="168" y="752" width="6" height="7" fill="#f0e0c0"/><path d="M174 745l6-3 1 7z" fill="#30a0e0"/>
<circle cx="217" cy="752" r="8" fill="#f4e010" stroke="#222"/><circle cx="214" cy="750" r="1.200" fill="#222"/><circle cx="220" cy="750" r="1.200" fill="#222"/><path d="M213 754c2 4 6 4 8 0" stroke="#222" fill="none"/>
<rect x="255" y="744" width="16" height="16" fill="#f2f2f2"/><path d="M256 745h11c3 2 3 6 0 8l-11 1z" fill="#d81e1e"/><circle cx="262" cy="750" r="3" fill="#fff"/>
<path d="M301 757l6-7 4 3 6-9 3 4-2 7-6 3-3-3z" fill="#d83020"/><path d="M301 752c3-5 8-6 12-5l-6 6-3-2z" fill="#e8a010"/><path d="M303 758c3 3 9 3 12-1l-4-2z" fill="#3090c8"/>
<circle cx="1079" cy="752" r="7.500" fill="#2040b0" stroke="#bcd"/>
<path d="M1097 741h6v5h-6zM1100 743h5v4h-5z" fill="none" stroke="#ddd"/><path d="M1098 756h5l-2.500 3z" fill="#ddd"/><path d="M1115 754h7l-3.500-4z" fill="#dde"/>
<path d="M1136 743l7-2 7 2v7c0 5-4 8-7 10-3-2-7-5-7-10z" fill="#2860d0" stroke="#cde"/><path d="M1139 751l3 3 5-6" stroke="#fff" stroke-width="2" fill="none"/>
<path d="M1161 742v18M1162 743h10v9h-10z" stroke="#eee" fill="#eee"/><circle cx="1171" cy="755" r="5" fill="#d02030"/>
<path d="M1183 760l6-6 3-8h6l-2 14z" fill="#20a030"/><circle cx="1190" cy="754" r="5" fill="#20a030"/><path d="M1187 754l3 3 5-7" stroke="#fff" stroke-width="1.500" fill="none"/>
<path d="M1210 748h8v13h-8z" fill="#eee" stroke="#445"/><path d="M1214 743v5M1218 743v5" stroke="#eee" stroke-width="2"/>
<path d="M1232 760v-2M1235.500 760v-5M1239 760v-8M1242.500 760v-11M1246 760v-14" stroke="#eef" stroke-width="2"/>
<path d="M1256 748h3l4-4v16l-4-4h-3z" fill="#eef"/><path d="M1265 748c2 2 2 6 0 8" stroke="#eef" fill="none"/>
</svg>
<div class="t m" style="left:1050px;top:745px;font-size:12px;font-weight:bold;color:#eef;letter-spacing:-1px">EN</div>
<div class="t" style="left:1075px;top:746px;font-size:12px;font-weight:bold;color:#fff">?</div>
<div class="t" style="left:1289px;top:746px;font-size:12px;color:#eee">20</div>

<!-- Outer dialog -->
<div class="b" style="left:412px;top:141px;width:507px;height:456px;background:#f0f0f0;border:2px solid #3c4452;border-top:0;border-radius:5px 5px 0 0"></div>
<div class="b" style="left:412px;top:141px;width:507px;height:20px;border-radius:5px 5px 0 0;background:linear-gradient(#6a7288,#3e465e 50%,#30384e)"></div>
<div class="ttl" style="left:417px;top:143px">条件选股</div>
<svg width="1300" height="763"><path d="M882 158h12" stroke="#e03020" stroke-width="3"/><path d="M898 148l11 11M909 148l-11 11" stroke="#e03020" stroke-width="2.500"/></svg>
<div class="lab" style="left:434px;top:179px">分组 &nbsp;| 全部 &nbsp;| 常用 &nbsp;| 自编 &nbsp;| 时间</div>
<div class="lab" style="left:673px;top:179px">选出技术指标数值满足下列条件的股票</div>

<!-- lower outer content -->
<div class="b" style="left:425px;top:548px;width:269px;height:39px;border:1px solid #999;border-top:0"></div>
<div class="b" style="left:432px;top:549px;width:194px;height:33px;background:#fff;border-left:1px solid #777"></div>
<div class="pb" style="left:635px;top:562px;width:50px">保存</div>
<div class="b" style="left:707px;top:549px;width:12px;height:12px;background:#f8f8f8;border-left:1px solid #888;border-top:1px solid #888"></div>
<div class="lab" style="left:725px;top:550px">历史阶段选股</div>
<div class="inp" style="left:708px;top:570px;width:90px;height:17px;background:#f0f0f0"></div>
<div class="dt" style="left:710px;top:571px;color:#777">2014/ 4/11</div>
<div class="sp" style="left:779px;top:571px;height:15px;background:linear-gradient(#ddd 49%,#888 50%,#ddd 54%)">&nbsp;</div>
<div class="lab" style="left:802px;top:572px;color:#333">--</div>
<div class="inp" style="left:817px;top:570px;width:89px;height:17px;background:#f0f0f0"></div>
<div class="dt" style="left:819px;top:571px;color:#777">2014/ 4/11</div>
<div class="sp" style="left:888px;top:571px;height:15px;background:linear-gradient(#ddd 49%,#888 50%,#ddd 54%)">&nbsp;</div>

<!-- Inner dialog -->
<div class="b" style="left:413px;top:186px;width:505px;height:364px;background:#f0f0f0;border:2px solid #3c4452;border-top:0;border-radius:5px 5px 0 0"></div>
<div class="b" style="left:413px;top:186px;width:505px;height:21px;border-radius:5px 5px 0 0;background:linear-gradient(#6a7288,#3e465e 50%,#30384e)"></div>
<div class="t" style="left:417px;top:189px;font-size:13px;color:#eee">信号成功率测试 <span class="m" style="font-size:11px">-</span> 技术指标:不好意思指标线第<span class="m" style="font-size:10px">1</span>条指标线大于<span class="m" style="font-size:10px">0[</span>日线<span class="m" style="font-size:10px">]</span></div>
<svg width="1300" height="763"><path d="M882 203h12" stroke="#e03020" stroke-width="3"/><path d="M898 193l11 11M909 193l-11 11" stroke="#e03020" stroke-width="2.500"/></svg>

<div class="tabb" style="left:422px;width:60px;border-color:#777 #fff #fff #777">统计数据</div>
<div class="tabb" style="left:485px;width:59px">详细列表</div>
<div class="tabb" style="left:548px;width:48px">分布图</div>

<div class="b" style="left:421px;top:238px;width:491px;height:229px;background:#fff;border:2px solid;border-color:#888 #eee #eee #888"></div>
<div class="dt" style="left:483px;top:241px"><i>测试结果</i></div>
<div class="dt" style="left:423px;top:273px"><i>测试股票数</i>:2489</div>
<div class="dt" style="left:423px;top:305px"><i>共发出指示</i>:31122 <i>成功指示</i>:19135 <i>失败指示</i>:11944 <i>未完成指示</i>:43</div>
<div class="dt" style="left:423px;top:337px"><i>平均成功率</i>:61.57%, <i>成功率达到</i>50%<i>的股票有</i>:45.1%</div>
<div class="dt" style="left:423px;top:369px"><i>利润</i>1<i>总平均</i>:20.75% <i>最大平均利润</i>1:<i>顺发恒业</i> 4743.18% <i>最小平均利润</i>1:<i>宁波港</i> 0.00%</div>
<div class="dt" style="left:423px;top:401px"><i>利润</i>2<i>总平均</i>:5.10% <i>最大平均利润</i>2:<i>顺发恒业</i> 3468.82% <i>最小平均利润</i>2:<i>广船国际</i> -489.78%</div>

<div class="lab" style="left:420px;top:490px">测试时段</div>
<div class="inp" style="left:469px;top:486px;width:109px"></div>
<div class="di" style="left:473px;top:487px">1990<i>年</i> 1<i>月</i> 1<i>日</i></div>
<div class="sp" style="left:560px;top:487px">▴<br>▾</div>
<div class="lab" style="left:582px;top:489px">-</div>
<div class="inp" style="left:592px;top:486px;width:109px"></div>
<div class="di" style="left:596px;top:487px">2014<i>年</i> 4<i>月</i>11<i>日</i></div>
<div class="sp" style="left:683px;top:487px">▴<br>▾</div>
<div class="lab" style="left:703px;top:490px">目标周期</div>
<div class="inp" style="left:754px;top:486px;width:33px"></div><div class="dt" style="left:756px;top:487px">20</div>
<div class="lab" style="left:793px;top:490px">天,目标利润</div>
<div class="inp" style="left:865px;top:486px;width:33px"></div><div class="dt" style="left:867px;top:487px">10</div>
<div class="dt" style="left:903px;top:488px">%</div>

<svg width="1300" height="763"><circle cx="426.500" cy="529" r="5" fill="#fff" stroke="#aaa"/><circle cx="426.500" cy="529" r="2" fill="#111"/><circle cx="500.500" cy="529" r="5" fill="#fff" stroke="#aaa"/></svg>
<div class="lab" style="left:437px;top:522px">多头测试</div><div class="lab" style="left:511px;top:522px">空头测试</div>
<div class="pb" style="left:592px">拷贝</div><div class="pb" style="left:675px">对比测试</div><div class="pb" style="left:757px">测试</div><div class="pb" style="left:840px">关闭</div>

<!-- watermark -->
<div class="b" style="left:1073px;top:4px;width:223px;height:57px;background:#fff"></div>
<div class="b" style="left:1075px;top:0;width:225px;height:4px;background:#222"></div>
<div class="t" style="left:1087px;top:7px;font-size:28px;font-weight:bold;color:#f0401c;letter-spacing:0">股票公式在线网</div>
<div class="t" style="left:1087px;top:36px;font-size:19.500px;font-weight:bold;color:#f0a020;font-family:'DejaVu Sans',sans-serif">www.gszx.com.cn</div>

</div></body></html>
